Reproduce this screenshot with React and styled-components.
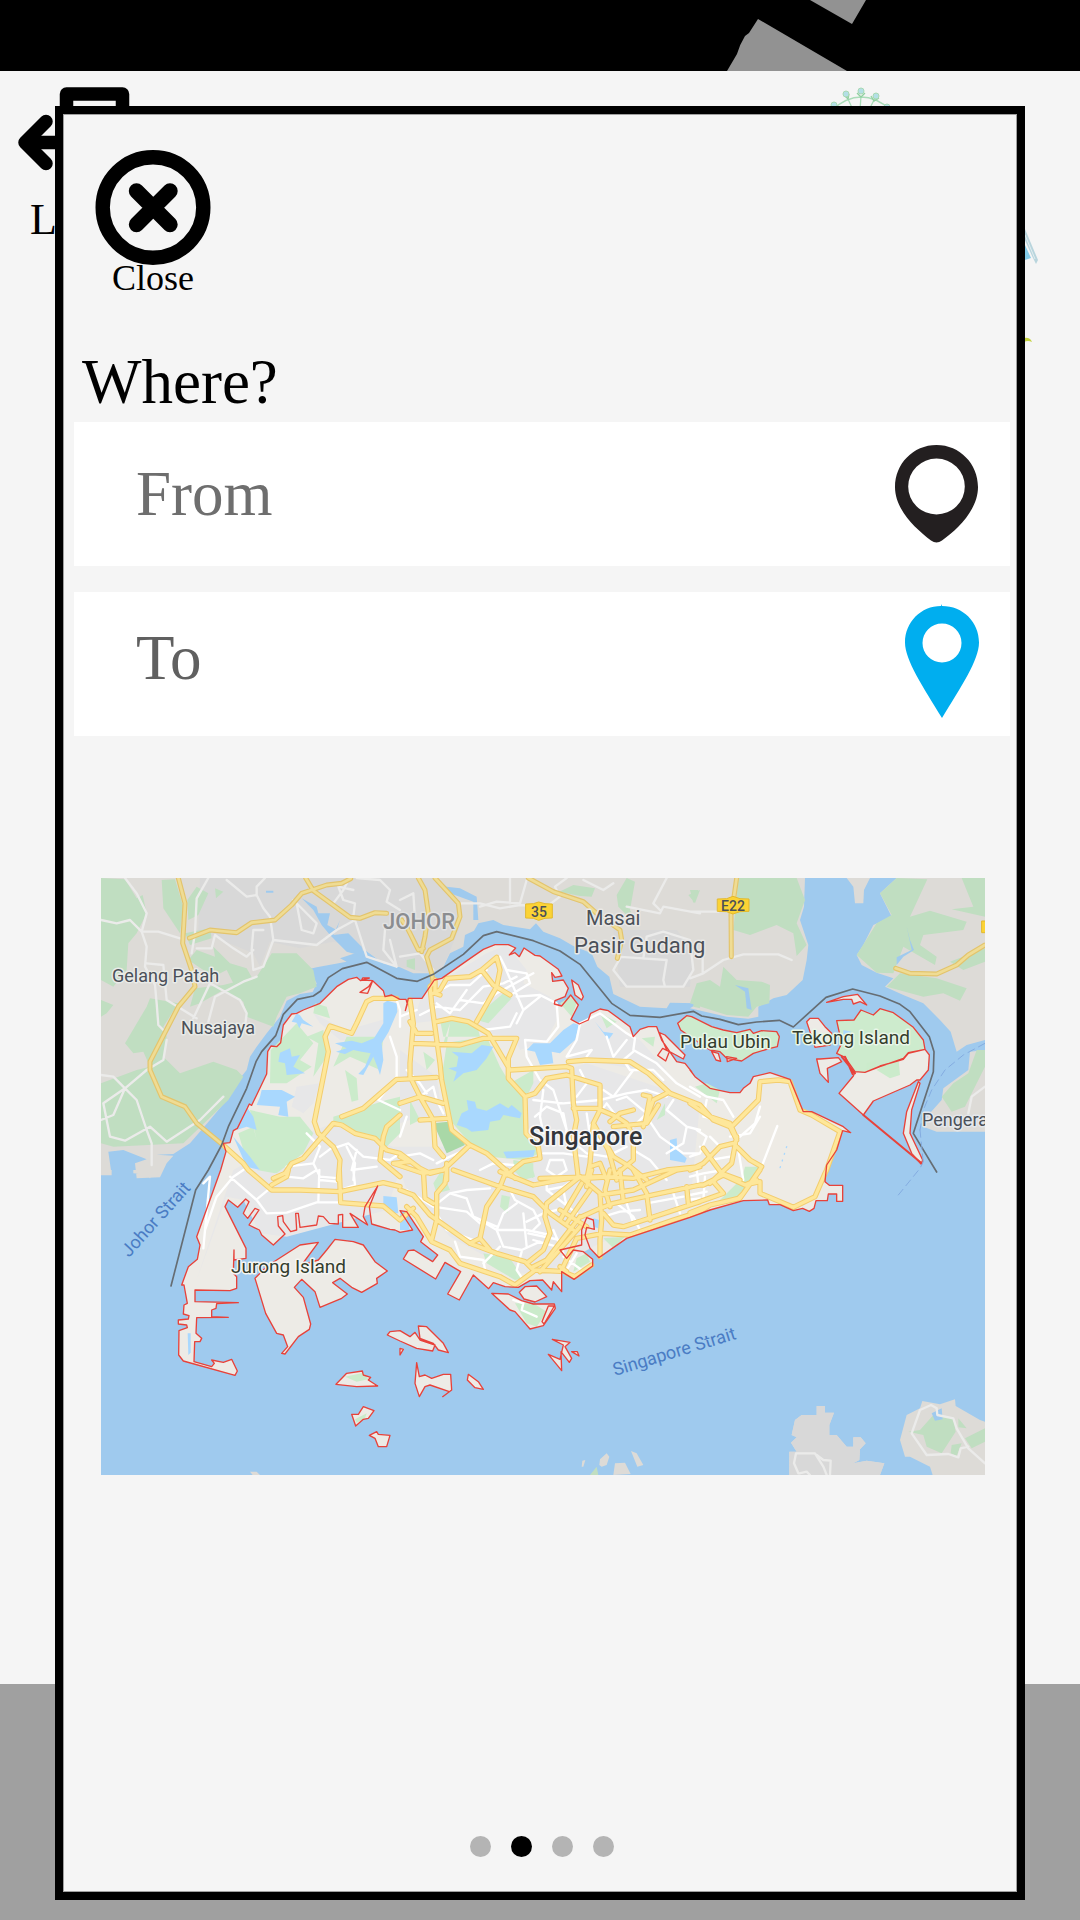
import React from 'react';
import styled, { createGlobalStyle } from 'styled-components';

const serif = '"Palatino Linotype", Palatino, "Liberation Serif", serif';
const sans = 'Roboto, "Liberation Sans", sans-serif';

const GlobalStyle = createGlobalStyle`
  * { box-sizing: border-box; }
  body { margin: 0; background: #f5f5f5; font-family: ${serif}; color: #000; }
  button, input { font-family: inherit; }
`;

const Page = styled.div`
  position: relative;
  display: flex;
  min-height: 100vh;
  padding: 106px 55px 20px;
  overflow: hidden;
`;

const Backdrop = styled.div`
  position: absolute;
  inset: 0;
  display: flex;
  flex-direction: column;
  background: #f5f5f5;
`;

const TopBar = styled.header`
  display: flex;
  justify-content: center;
  height: 71px;
  background: #000;
`;

const TopBarArt = styled.svg`
  width: 100%;
  height: 71px;
`;

const Home = styled.main`
  flex: 1;
  display: flex;
  justify-content: space-between;
  align-items: flex-start;
`;

const BackButton = styled.button`
  display: flex;
  flex-direction: column;
  align-items: flex-start;
  padding: 16px 0 0 18px;
  border: 0;
  background: none;
  color: #000;
  font-size: 44px;
  line-height: 48px;

  svg { display: block; }
  span { padding: 15px 0 0 12px; }
`;

const BottomBar = styled.footer`
  height: 236px;
  background: #a0a0a0;
`;

const Dialog = styled.section`
  position: relative;
  flex: 1;
  min-width: 0;
  display: flex;
  flex-direction: column;
  padding: 36px 7px 35px 11px;
  border: 8px solid #000;
  background: #f5f5f5;
  box-shadow: inset 0 0 0 1px #a0a0a0;
`;

const CloseButton = styled.button`
  align-self: flex-start;
  display: flex;
  flex-direction: column;
  align-items: center;
  margin-left: 21px;
  padding: 0;
  border: 0;
  background: none;
  color: #000;
  font-size: 36px;
  line-height: 27px;
  cursor: pointer;

  svg { display: block; }
`;

const Title = styled.h1`
  margin: 54px 0 4px 8px;
  font-size: 63px;
  line-height: 72px;
  font-weight: 400;
`;

const Form = styled.form`
  display: flex;
  flex-direction: column;
  gap: 26px;
`;

const Field = styled.label`
  display: flex;
  align-items: center;
  height: 144px;
  padding: 0 ${p => p.$inset}px 0 62px;
  background: #fff;

  svg { flex: none; display: block; }
`;

const FieldInput = styled.input`
  flex: 1;
  min-width: 0;
  height: 100%;
  padding: 0 0 ${p => p.$lift}px;
  border: 0;
  outline: 0;
  background: none;
  color: #000;
  font-size: 63px;

  &::placeholder { color: ${p => p.$tone}; opacity: 1; }
`;

const MapFigure = styled.figure`
  margin: 142px 25px 40px 27px;
`;

const MapSvg = styled.svg`
  display: block;
  width: 100%;
  height: auto;
  background: #9fcaee;
`;

const Dots = styled.nav`
  display: flex;
  justify-content: center;
  gap: 20px;
  margin-top: auto;
`;

const Dot = styled.button`
  width: 21px;
  height: 21px;
  padding: 0;
  border: 0;
  border-radius: 50%;
  background: ${p => (p.$active ? '#000' : '#b4b4b4')};
`;

const Place = styled.text`
  font-family: ${sans};
  font-size: ${p => p.$size || 18}px;
  font-weight: ${p => p.$weight || 400};
  fill: ${p => p.$color || '#4b5058'};
  stroke: ${p => p.$halo || 'none'};
  stroke-width: 3px;
  stroke-linejoin: round;
  paint-order: stroke;
`;

/* The map is drawn on six sheets, three across and two down. A shape is a
   list of runs, each written in the coordinates of its own sheet. */
const SHEETS = { A: [0, 0], B: [900, 0], C: [1770, 0], D: [0, 900], E: [900, 900], F: [1770, 900] };
const run = text => {
  const [dx, dy] = SHEETS[text[0]];
  return text.slice(1).trim().split(/\s+/).map(pair => {
    const [x, y] = pair.split(',').map(Number);
    return `${x + dx},${y + dy}`;
  });
};
const trace = shape => 'M' + shape.split('|').flatMap(part => run(part.trim())).join('L');
const closed = shapes => shapes.map(s => trace(s) + 'Z').join('');
const open = shapes => shapes.map(trace).join('');

const johor = [
  'A 3,24 | C 345,24 342,110 330,150 355,225 350,270 338,330 290,375 250,385 205,410 205,440 175,446 110,440 0,415 | B 895,400 810,398 800,415 720,410 640,372 628,320 592,290 575,250 520,228 480,205 430,185 408,160 390,178 310,165 280,150 235,160 222,182 195,195 190,230 150,250 130,290 95,310 40,310 0,292 | A 850,280 795,240 720,265 740,275 650,292 625,298 650,340 638,366 600,372 560,392 540,440 500,490 470,530 450,560 440,600 400,650 380,690 330,750 270,820 220,852 170,854 220,857 200,880 180,922 110,925 105,880 140,868 70,840 25,845 35,915 3,915',
  'D 100,0 190,0 150,25 125,12 100,10', 'D 3,0 35,0 35,16 3,16',
];
const pengerang = [
  'C 620,24 885,24 885,510 830,525 800,545 782,485 750,450 700,400 640,375 585,350 610,325 560,308 515,285 500,255 520,225 550,165 605,140 570,70',
  'C 470,24 490,50 495,100 520,100 522,60 540,24',
  'C 885,540 840,545 835,600 760,655 755,690 715,735 700,770 740,785 885,785',
];
const southShores = [
  'F 380,708 405,708 405,728 432,728 418,765 418,795 440,795 470,830 490,830 490,802 512,802 527,820 510,838 508,870 490,880 530,872 583,880 570,915 298,915 298,845 320,845 303,818 320,802 305,795 315,750 335,735 380,735',
  'F 697,693 750,703 795,688 797,708 870,750 885,755 885,915 728,915 720,890 660,860 645,860 630,810 650,735 690,715',
  'E 640,915 645,880 675,878 692,912', 'E 598,885 600,868 620,850 628,860 620,885 605,890', 'E 693,843 710,850 730,885 712,890',
  'E 545,890 547,872 556,870 550,890', 'D 450,905 470,905 480,915 458,915',
];
const malayGreens = [
  'A 3,24 75,28 110,85 128,75 140,130 110,190 85,220 80,300 40,350 3,330', 'A 185,30 225,28 250,110 240,190 190,115', 'A 262,90 290,50 325,70 295,135 265,150',
  'A 255,190 330,175 335,205 270,225', 'A 345,55 370,65 348,85', 'A 265,270 290,240 345,260 340,230 390,280 440,295 460,330 400,340 380,300 340,320',
  'A 515,250 590,250 640,300 650,350 600,370 560,380 530,440 520,470 440,440 430,395 370,360 300,400 270,410 285,355 370,345 470,320', 'A 75,520 140,410 150,385 235,400 190,470 200,500 190,560 240,610 340,575 410,600 430,620 385,690 250,820 40,830 3,820 3,640 110,600 150,590 130,545 100,550',
  'A 3,390 40,405 20,430 3,440', 'B 478,65 520,45 585,55 575,80 540,78', 'B 650,75 680,24 705,35 690,120 715,170 655,110', 'B 865,75 900,60 885,100', 'B 20,270 45,265 45,300 20,290', 'B 880,375 900,355 900,415 880,410',
  'C 145,24 320,24 345,90 320,160 350,225 320,258 310,190 260,165 180,195 130,180', 'C 20,340 60,330 90,350 100,290 140,330 215,335 240,345 238,400 200,410 175,440 110,435 0,400',
  'C 620,24 712,28 660,140 720,122 830,155 820,180 700,195 690,225 740,260 735,285 640,230 610,310 560,308 500,255 560,160 605,135 570,70', 'C 815,24 885,24 885,140 785,118 850,110', 'C 590,350 630,310 740,325 830,355 810,392 760,370 700,380', 'C 780,275 885,235 885,275 820,300', 'C 860,540 885,540 885,590 825,710 785,725 755,680 790,640 835,610', 'C 0,60 25,60 10,100',
  'F 655,785 690,780 730,735 790,745 797,785 755,850 710,830 700,795', 'F 805,745 830,775 805,772', 'F 825,805 885,775 885,815 845,835', 'F 785,825 815,820 800,858 782,850', 'E 570,915 590,890 595,915',
];
const malayTowns = [
  'A 300,24 900,24 900,290 850,280 795,240 700,215 600,235 510,215 480,290 460,250 340,200 295,180', 'B 0,24 110,24 180,110 180,170 130,290 90,310 0,290',
  'B 640,180 830,180 880,240 870,350 660,350',
];
const malayWater = [
  'A 605,85 650,110 655,130 690,130 682,165 710,180 720,150 700,195 745,190 785,230 795,260 740,245 690,195 665,165 640,120',
  'B 115,30 140,50 180,55 230,80 235,150 220,150 220,95 150,70', 'C 650,170 660,210 672,240 640,260 620,285 620,262 665,240', 'C 135,345 175,355 185,420 170,415 165,365', 'A 498,62 520,62 520,68 498,68', 'F 725,730 755,715 758,748 735,752',
];

const singapore = 'A 370,820 390,818 400,782 412,775 448,702 455,706 500,612 503,545 513,528 530,530 542,518 550,465 575,432 590,430 610,420 660,400 710,350 745,328 770,322 782,332 808,324 788,324 785,330 818,332 803,370 780,367 806,350 818,332 850,362 855,380 875,375 900,388 | B 18,388 22,402 16,422 25,385 66,385 103,330 125,325 215,262 250,238 285,224 325,224 347,234 328,255 345,248 358,260 372,234 405,256 420,258 475,298 486,318 465,322 455,308 458,334 490,330 505,355 495,380 465,392 463,402 485,408 512,375 535,405 513,448 538,462 565,450 572,430 600,417 625,422 690,470 700,500 720,478 745,470 770,470 785,510 830,575 855,580 875,605 | C 0,600 15,620 60,655 120,668 150,668 160,655 180,640 190,620 240,608 300,628 340,725 365,725 460,770 482,788 458,782 440,840 410,885 | F 405,35 418,46 458,46 458,94 440,94 440,72 415,72 412,92 378,92 372,115 358,124 338,115 310,122 270,104 238,104 233,90 160,92 60,120 0,142 | E 680,205 597,263 570,235 555,195 560,172 583,178 580,150 560,143 545,180 545,225 480,240 500,265 520,240 550,245 578,268 578,288 522,328 485,305 485,365 460,335 455,360 428,330 390,332 355,352 315,350 280,338 266,356 220,315 178,390 143,372 182,305 135,277 107,327 10,267 25,242 42,240 98,275 113,255 62,215 70,200 20,125 0,122 38,180 0,187 | D 885,180 870,178 815,162 808,110 833,48 795,110 790,140 803,165 750,130 775,172 728,172 728,133 715,135 715,162 688,160 670,140 655,138 650,165 600,172 595,130 587,130 590,180 572,185 550,155 548,137 533,140 535,168 555,192 520,225 485,195 478,180 447,165 477,120 465,115 443,145 430,130 447,95 437,87 413,112 385,90 375,110 438,235 438,265 402,270 402,240 400,310 410,320 410,355 390,362 285,360 285,395 415,398 350,401 348,415 335,420 335,440 385,442 290,443 288,490 305,505 300,515 284,515 282,575 335,590 343,580 335,570 370,577 395,568 412,603 405,616 250,573 236,555 237,482 262,473 260,465 235,462 235,450 265,447 267,437 250,432 252,405 262,400 252,345 245,345 265,290 292,268 300,225 290,200 362,0 | A 378,845';
const islands = [
  'C 390,567 445,563 455,575 412,595 415,637 390,610 380,567', 'C 350,455 360,445 385,445 405,470 425,490 420,525 375,532 365,500', 'C 410,397 460,380 503,373 530,405 510,395 490,402 485,388 460,388',
  'C 495,605 525,607 570,588 640,568 655,550 705,538 718,555 715,600 690,630 680,630 660,645 550,693 520,735 447,670 490,618',
  'C 690,640 665,720 660,790 698,870 693,882 665,850 640,790 650,725 685,635', 'C 65,545 85,550 92,574 78,570', 'C 110,560 140,565 112,575', 'B 515,330 535,345 550,380 545,390 525,375', 'B 778,488 795,495 855,555 850,567 800,540', 'B 788,535 808,545 797,573 773,556',
  'D 530,270 600,225 655,217 605,285 655,270 680,240 705,208 760,215 790,225 825,275 862,303 830,325 832,340 785,367 755,352 720,325 698,338 742,372 725,385 660,412 645,365 605,328 583,352 610,382 632,462 628,478 595,500 555,552 545,550 563,530 550,495 530,490 497,430 465,325 500,290',
  'D 708,643 740,610 787,603 790,615 812,622 805,630 833,648 770,650', 'D 755,733 775,733 790,710 822,722 805,745 790,748 767,768', 'D 808,796 830,785 835,793 870,796 860,830 835,830 825,805',
  'D 862,495 870,485 900,482 | E 30,500 45,487 60,510 105,525 98,543 50,535 0,513', 'E 55,468 80,470 130,520 145,548 115,540 100,520 60,505', 'E 50,578 58,620 75,615 95,625 130,613 152,613 155,660 128,680 148,665 90,645 75,650 58,680 45,640', 'E 205,613 235,635 250,658 225,653 202,630', 'E 0,535 10,538 0,555',
  'E 275,370 325,372 365,392 400,402 440,402 463,402 466,415 430,467 390,477 345,425 330,420', 'E 358,367 375,350 410,348 440,380 405,396 372,387', 'E 445,408 463,408 432,462 426,455', 'E 457,508 510,517 495,530 515,565 508,577 483,545 485,602 445,553 480,568 490,525', 'E 515,545 532,545 537,558',
];
const greenIslands = [
  'B 833,460 860,437 875,440 | C 5,440 65,470 100,480 140,488 180,478 190,490 215,482 260,485 268,500 262,530 240,535 190,550 155,573 110,565 90,545 60,540 0,500 -28,480',
  'C 440,452 492,450 513,420 550,435 570,416 610,428 670,472 700,510 705,538 655,548 640,565 570,590 525,607 495,605 465,562 440,550 455,520',
];
const urban = [
  'B 60,390 130,330 260,250 320,225 380,300 370,340 450,380 475,440 440,510 360,540 340,500 250,490 200,450 120,450 40,460', 'B 380,640 560,580 800,660 900,700 | F 0,110 | E 600,220 430,310 350,310 150,200 20,60 0,0 | D 860,120 560,200 480,190 430,90 380,80 290,330 | A 400,900 490,850 610,870 620,790 700,760 880,830 | B 100,830 200,830 340,890 420,850 380,780',
  'B 530,480 600,430 690,500 720,510 800,600 720,600 500,560', 'B 0,540 110,620 130,760 60,740 0,760', 'A 590,650 660,640 640,700 610,730 575,710', 'A 640,430 740,480 880,440 840,520 720,510 660,460',
];
const parks = [
  'A 512,540 590,460 640,520 600,570 635,590 560,640 510,640', 'A 620,500 670,480 680,560 640,620 655,520', 'A 415,790 460,770 470,810 450,720 540,740 600,740 640,790 610,850 530,910 480,900 430,840', 'A 645,400 680,410 690,445 640,430', 'A 735,600 770,625 775,690 755,695', 'A 740,500 850,500 840,600 750,560 700,590',
  'A 700,740 860,690 | B 0,680 0,790 | A 860,830 760,780 700,760', 'B 240,430 310,370 335,385 265,460 230,450', 'B 480,400 510,380 530,400 515,440', 'B 600,430 650,455 620,475', 'B 150,460 130,520 260,500 300,590 330,640 400,600 400,640 375,690 380,790 420,850 370,870 270,860 210,820 150,750 125,620', 'B 120,450 230,460 240,500 130,500', 'B 30,690 60,750 30,765', 'B 340,870 400,880 400,925 340,905', 'B 70,545 105,570 80,600', 'B 770,750 795,700 795,735', 'B 725,505 765,500 760,530',
  'E 125,0 150,60 110,70 100,40', 'E 305,75 330,80 322,130 300,110', 'E 340,0 400,0 405,20 370,30', 'E 250,250 330,265 370,325 345,330 260,280', 'E 530,265 560,250 570,275 520,305', 'E 610,205 675,200 640,235', 'E 345,400 400,400 440,425 410,470 380,460',
  'F 160,20 185,0 205,0 150,80 90,90', 'C 165,890 215,890 185,930 155,930', 'C 15,650 50,640 90,660 80,700', 'D 470,0 530,0 525,10', 'D 735,620 790,608 805,628 770,635', 'D 765,748 800,730 795,745 770,758', 'C 530,580 560,570 555,595 530,600', 'C 560,600 625,560 630,615 600,625',
];
const lakes = [
  'A 540,548 570,535 575,560 600,555 580,590 615,610 560,615 555,580 535,575', 'A 485,660 545,660 585,680 560,695 565,740 535,735 540,710 470,705 480,680', 'A 590,430 600,436 610,450 640,470 605,460 598,475 590,458 575,455', 'A 850,400 862,392 890,400 892,425 866,485 845,520 850,570 840,615 832,590 820,560 790,615 775,612 795,590 812,550 785,545 760,540 735,552 708,545 740,535 705,520 755,512 785,520 822,505 850,460',
  'A 440,710 460,740 470,780 440,770 410,780', 'A 400,800 450,860 480,900 440,890', 'B 145,595 170,590 175,560 155,545 215,550 245,525 280,530 260,565 230,600 190,610 160,635 170,605', 'B 170,765 185,730 205,720 200,690 225,695 230,715 260,722 300,700 325,715 335,705 365,730 360,745 310,735 300,750 270,755 265,780 215,785 200,775', 'B 310,845 405,840 400,860 320,865', 'B 520,460 538,465 525,510 480,550 455,545 460,580 420,585 405,545 380,540 400,520 450,520 490,480',
  'B 585,455 610,485 640,490 625,510', 'B 810,810 830,805 832,840 860,865 855,878 810,870', 'D 850,78 890,82 895,130 870,130 850,105', 'E 580,145 598,150 595,175 580,170', 'E 0,130 20,140 30,180 0,180', 'C 460,480 485,485 460,495', 'D 263,490 272,490 272,548 265,555',
];

const border = 'D 213,348 287,60 325,0 | A 365,825 385,770 440,655 468,575 485,545 527,497 550,433 592,388 640,378 662,363 685,323 727,296 800,277 890,325 | B 52,334 100,313 190,253 250,197 290,185 400,212 480,243 540,283 635,400 690,436 780,442 880,424 | C 35,438 90,448 145,464 200,456 268,451 310,471 408,382 488,357 570,378 630,403 660,425 718,500 732,545 730,605 670,790 740,906';

const malayLanes = [
  'A 75,24 110,70 140,130 125,185 140,230 135,290 165,345 170,400 175,465 195,485', 'A 3,150 50,160 90,150 125,185 175,185 240,205', 'A 325,24 290,85 285,190 275,250', 'A 380,30 440,80 470,75 470,50 495,24', 'A 470,75 490,115 510,140 520,210 490,290 460,300 455,240 460,180 490,180', 'A 290,235 335,235 345,195 400,235 440,260 460,240',
  'A 520,210 650,225 710,180 765,150 800,260 890,290', 'A 590,100 605,180 640,190 650,160 610,120 580,90', 'A 325,455 345,380 430,335 470,320', 'A 280,445 330,340 420,390 440,430 435,470', 'A 140,280 190,285 200,390 290,445', 'A 3,615 40,620 75,655 140,600 190,570 200,510', 'A 75,655 110,690 140,780 155,820 155,885', 'A 75,655 10,700 30,800 75,812 150,770 200,815 300,750 370,680', 'A 3,750 40,735 75,655', 'A 760,60 715,50 730,90 765,100 760,140', 'A 770,24 840,30 870,60 860,95 900,120', 'A 855,180 850,240 890,290 870,210', 'A 700,100 730,60 745,30',
  'B 0,90 40,70 45,150 0,150', 'B 0,260 60,250 100,300', 'B 180,100 240,100 300,115 360,105 440,110 480,80 465,50 500,24', 'B 240,110 290,95 360,100 380,30', 'B 550,30 610,60 640,40', 'B 680,110 780,130 790,110 900,130', 'B 780,120 760,100 800,24', 'B 650,260 730,265 740,200 790,185 870,210 880,300 850,350 680,350 640,300 660,265', 'B 725,265 800,270 790,330 795,350', 'B 330,24 330,100',
  'C 0,325 40,310 100,270 160,253 265,253 305,270', 'C 0,125 85,125', 'C 38,310 38,260 15,260', 'C 835,730 845,680 885,650', 'F 325,910 312,880 318,850 375,850 400,890 410,915', 'F 380,855 400,870 422,872 420,915', 'F 328,910 350,905 360,915', 'F 885,880 835,835 800,775 790,745 742,735 740,715 723,705 690,720 665,790 710,855 775,852 805,862 812,835 835,830',
];
const lanes = [
  'A 310,940 330,920 | D 310,235 315,180 350,80 400,20 430,0', 'D 390,20 470,90 500,130 560,128 650,97 720,97', 'D 470,88 510,55', 'D 655,95 658,0', 'D 560,20 610,25 650,0', 'D 660,30 710,35', 'D 735,55 765,45 760,0', 'A 560,890 640,880 660,830 620,790', 'A 640,880 660,920 720,925', 'A 700,835 745,820 790,860 870,870 900,850', 'A 660,860 700,830', 'A 890,390 900,420 | B 0,470', 'A 870,500 890,560 890,620 835,690 900,720', 'A 740,830 765,880 760,930', 'A 770,840 755,900 830,890',
  'B 100,370 150,345 210,345 260,300', 'B 60,435 110,410 180,420 250,350 310,340 350,320', 'B 110,400 150,430 200,360', 'B 180,390 250,400 290,370', 'B 300,260 320,300 380,310 390,340 340,370', 'B 310,280 340,350 370,420 350,460', 'B 350,380 420,375 470,400 475,470 440,515 375,510 380,560 420,630 460,660 500,780 490,810', 'B 370,420 420,380', 'B 250,480 330,470 350,430', 'B 290,370 400,310', 'B 50,420 0,440', 'B 560,560 575,540 500,560 530,510 540,460 600,430 680,490 705,505 700,540 770,580 830,640 900,680', 'B 620,500 640,560 680,510', 'B 700,545 670,570 690,600 760,600 790,630', 'B 400,690 490,700 600,690 680,670 740,660 800,680', 'B 405,740 440,710 490,730 500,780', 'B 430,660 420,740 430,790', 'B 540,600 560,640 530,680', 'B 610,660 640,680 700,600', 'B 650,690 680,680 740,730 700,770', 'B 740,740 780,800 850,850 900,850', 'B 820,690 800,720 860,770 900,780', 'B 860,770 850,820 800,850', 'B 500,800 560,850 620,860 680,830', 'B 430,850 490,850 560,860', 'B 440,900 450,870 490,870 500,900 470,920 440,900', 'B 560,730 570,800 620,820', 'B 60,680 100,650 110,690 130,730', 'B 20,740 0,800', 'B 20,600 60,640 80,670', 'B 110,880 150,860 220,830', 'B 240,900 280,880 340,885', 'B 0,860 60,850 100,870', 'B 700,840 750,870 800,930', 'B 570,770 620,700 650,740',
  'E 20,60 100,110 150,70 200,85 220,140 290,170', 'E 150,70 200,60 270,55', 'E 100,110 200,125 240,160', 'E 110,130 140,180 220,210', 'E 330,60 345,90 400,120 420,160 400,180', 'E 350,100 310,130 290,180', 'E 240,150 290,180 380,180 450,195', 'E 290,180 310,230 365,240 420,215', 'E 365,245 350,300 370,330', 'E 165,215 180,260 250,270 255,300', 'E 250,280 280,250 300,230', 'E 370,130 380,230', 'E 380,155 430,130 470,120', 'E 385,190 480,210', 'E 400,210 470,230', 'E 460,180 490,250', 'E 440,60 490,50 520,30', 'E 440,30 440,60 530,130', 'E 490,60 500,110', 'E 600,120 650,100 700,140 720,180', 'E 680,100 700,160', 'E 610,140 660,125 720,120', 'E 740,100 850,80', 'E 720,150 800,130', 'E 820,70 840,130', 'E 860,90 900,85', 'E 500,300 530,250', 'E 490,260 545,300', 'E 340,390 370,400 365,420 410,440',
  'C 0,650 50,680 100,690 130,740', 'C 0,690 60,740', 'C 50,690 40,740 90,750', 'C 210,710 195,760 150,800', 'C 120,800 180,790 210,740', 'C 30,830 60,870 120,860', 'C 20,780 50,800 30,850 0,860', 'C 215,890 262,768', 'C 140,810 160,930', 'F 0,20 40,10 100,0', 'F 20,0 25,40', 'F 45,20 40,90', 'F 0,75 50,65', 'C 60,800 90,830',
];
const malayHighways = [
  'A 235,24 255,100 248,220 278,310 285,350 235,410 150,575 150,600 185,680 255,710 290,760 375,830', 'A 268,204 330,180 410,188 455,158 525,150 575,105 605,70 680,45 725,40 752,26', 'A 617,24 640,62 750,142 780,145 825,128 860,130',
  'B 55,24 75,60 85,130 75,200 65,245', 'B 105,24 175,100 180,140 155,205 90,240 80,260 95,310 100,340', 'B 385,24 460,65 550,95 590,130 660,180 665,210 652,265', 'B 5,150 20,170 55,240 70,235', 'C 140,24 132,80 123,130 124,260', 'C 885,225 835,255 800,285 740,312 660,310 617,295',
];
const highways = [
  'A 375,830 430,880 | D 445,0 515,60 600,60 720,65 850,38 900,50', 'A 520,925 555,910 575,880 610,865 700,760 725,765 765,790 825,805 860,840 900,850 | B 60,895 90,910 130,900 210,825 260,850 345,925', 'A 725,740 790,715 890,628 900,628 | B 110,622', 'A 890,385 820,385 800,395 770,460 755,490 690,468 675,500 685,545 643,755 655,790 700,830 720,870 715,930', 'D 718,0 722,98 | D 850,108 900,150', 'A 900,735 860,770 850,800 840,870 900,920', 'D 515,45 560,20 565,0',
  'B 100,340 90,350 95,400 120,580 125,630 155,780 210,825', 'B 30,390 40,460 30,580 30,620 60,680 100,750 105,830 130,860', 'B 30,455 50,490 95,490', 'B 110,455 155,445 205,455 265,490 330,600 500,590 515,595 520,700 530,750 520,800 535,925', 'B 40,520 180,525 250,505 350,505 325,565 325,625 375,680 378,790 415,830 420,865 370,875 320,915', 'B 100,370 120,360 140,325 210,320 245,300 290,262 300,300 290,350 230,455', 'B 245,300 280,345 330,375', 'B 105,330 105,370 120,375', 'B 505,575 560,570 690,575 745,610 810,670 900,705 | C 70,750 120,770 140,810', 'B 375,680 405,670 440,625 500,615 600,645 600,720 580,760 625,840 650,930', 'B 520,715 590,715 650,740 680,760 700,800 700,870 640,920 560,925', 'B 640,770 740,760 775,705', 'B 580,765 570,880 560,930', 'B 730,675 750,680 735,760', 'B 800,670 760,690 730,770', 'B 0,860 30,875 | E -20,-20 70,10 130,0', 'B 60,750 140,745', 'B 0,700 60,680 130,700', 'B 630,755 660,730 700,720', 'B 600,790 640,860 690,890 740,930', 'B 420,925 600,920 700,925 800,900 900,890 | C 0,900 40,880 90,830 130,820 180,870 215,890 160,970 | F 145,85 60,105 0,128',
  'B 570,890 600,880 620,930', 'B 140,880 140,930',
  'E 0,60 40,75 90,135 210,220 290,250 375,275 400,300 500,305 480,290', 'E 70,0 75,85 100,100', 'E 140,0 135,40 110,70 110,150 95,210', 'E 20,110 50,140 95,215 150,240 180,280 300,320 345,345 400,305', 'E 160,0 300,50 400,80 450,130 520,180', 'E 320,0 300,50 260,110 240,205 270,240', 'E 210,220 240,205', 'E 300,5 400,45 480,30 540,20 600,70 605,150 600,210 600,260', 'E 540,20 440,100 435,140 450,190 430,240 380,280', 'E 545,40 480,150', 'E 570,60 500,160', 'E 400,290 440,270 540,140', 'E 420,305 540,170', 'E 480,120 560,170', 'E 485,300 530,205 610,190 690,195 820,150 900,125 | F 60,105 150,85 210,0', 'E 545,140 600,115 640,100 780,70 900,45 | F 40,45 100,15 165,45 200,30', 'E 600,75 700,60 830,0 900,-10', 'E 610,130 640,165 670,170 900,95', 'E 630,0 615,60 630,110', 'E 660,0 670,95', 'E 700,0 740,70 750,150', 'E 860,50 865,100', 'E 575,0 560,50', 'E 500,310 525,320 575,285', 'E 0,150 40,115',
  'C 0,700 60,740 120,760 140,805', 'C 130,765 205,690 210,635 265,630 300,635 330,720 365,735 450,785 410,900 | F 405,10 375,80 310,112 210,70 210,35 165,45', 'C 40,835 95,910 150,930', 'C 140,800 125,880 60,940', 'F 95,10 70,35 100,70 0,105',
];
const airport = ['C 210,690 265,640 300,635 330,725 450,785 405,900 | F 400,20 370,80 310,110 210,70 200,10'];
const ferryRoutes = ['C 885,520 820,555 765,600 725,660 700,720 690,780', 'F 625,75 690,-5 700,-25', 'C 690,780 695,830 700,880'];

function SingaporeMap() {
  return (
    <MapSvg viewBox="0 0 884 597" role="img" aria-label="Singapore">
      <g transform="scale(0.333333) translate(-3 -24)" strokeLinejoin="round" strokeLinecap="round">
        <path d={closed([...johor, ...pengerang, ...southShores])} fill="#dddbd7" />
        <path d={closed(malayTowns)} fill="#d8d8d8" />
        <path d={closed(southShores.slice(0, 1))} fill="#d8d8d8" />
        <path d={closed(malayGreens)} fill="#c0dec1" />
        <path d={closed(malayWater)} fill="#9fcaee" />
        <path d={open(malayLanes)} fill="none" stroke="#ebebea" strokeWidth="7" />
        <path d={open(malayHighways)} fill="none" stroke="#e3c46c" strokeWidth="15" />
        <path d={open(malayHighways)} fill="none" stroke="#efdc94" strokeWidth="8" />

        <path d={closed([singapore, ...islands])} fill="#edebe6" />
        <path d={closed(greenIslands)} fill="#cdebcd" />
        <path d={closed(urban)} fill="#e7e7e8" />
        <path d={closed(airport)} fill="#eeebe5" />
        <path d={closed(parks)} fill="#cbebcb" />
        <path d={closed(['B 100,760 145,755 195,825 140,850'])} fill="#a9d8a7" />
        <path d={closed(lakes)} fill="#a9d8fe" />
        <path d={open(lanes)} fill="none" stroke="#fff" strokeWidth="7" />
        <path d={open(highways)} fill="none" stroke="#f3cd6e" strokeWidth="16" />
        <path d={open(highways)} fill="none" stroke="#fee79a" strokeWidth="10" />
        <path d={open(['C 290,830 265,910'])} fill="none" stroke="#a9d8fe" strokeWidth="4" strokeDasharray="3 18" />
        <path d={closed([singapore, ...islands, ...greenIslands])} fill="none" stroke="#e8423a" strokeWidth="4" />
        <path d={open(['C 520,735 695,880', 'C 455,560 495,610', 'C 465,560 488,612'])} fill="none" stroke="#e8423a" strokeWidth="6" />
        <path d={open([border])} fill="none" stroke="#666d73" strokeWidth="5" />
        <path d={open(ferryRoutes)} fill="none" stroke="#84ace0" strokeWidth="3" strokeDasharray="22 14" />

        <g fill="#fbd335" stroke="#e3b92c" strokeWidth="3">
          <path d="M1278 102L1300 101L1316 96L1335 101L1357 102V144L1335 145L1316 151L1300 145L1278 144Z" />
          <path d="M1853 87L1880 86L1899 79L1920 86L1947 87V124L1920 125L1899 132L1880 125L1853 124Z" />
          <path d="M2646 153H2660V188H2646Z" />
        </g>
      </g>

      <Place x="282" y="51" $size={22} $weight={500} $color="#8b8d90" $halo="#e2e2e2">JOHOR</Place>
      <Place x="11" y="104" $halo="#e9ebe8">Gelang Patah</Place>
      <Place x="80" y="156" $halo="#e9ebe8">Nusajaya</Place>
      <Place x="485" y="47" $size={20} $halo="#e9e8e6">Masai</Place>
      <Place x="473" y="75" $size={22} $halo="#e9e8e6">Pasir Gudang</Place>
      <Place x="579" y="170" $size={19} $color="#343d2d" $halo="#e9f6e9">Pulau Ubin</Place>
      <Place x="691" y="166" $size={19} $color="#343d2d" $halo="#e9f6e9">Tekong Island</Place>
      <Place x="130" y="395" $size={19} $color="#343d2d" $halo="#f6f5f2">Jurong Island</Place>
      <Place x="428" y="267" $size={25} $weight={500} $color="#33363b" $halo="#f7f7f7">Singapore</Place>
      <Place x="821" y="248" $halo="#e4e8ec">Pengera</Place>
      <Place transform="translate(28 380) rotate(-48)" $color="#4a7cc4">Johor Strait</Place>
      <Place transform="translate(514 498) rotate(-17)" $color="#4a7cc4">Singapore Strait</Place>
      <Place x="438" y="39" $size={14} $weight={500} textAnchor="middle">35</Place>
      <Place x="632" y="33" $size={14} $weight={500} textAnchor="middle">E22</Place>
    </MapSvg>
  );
}

function CloseIcon() {
  return (
    <svg width="116" height="115" viewBox="0 0 116 115" fill="none" stroke="#000" aria-hidden="true">
      <circle cx="58" cy="57.5" r="50.3" strokeWidth="14.4" />
      <path d="M41.5 41L75 74.5M75 41L41.5 74.5" strokeWidth="15.4" strokeLinecap="round" />
    </svg>
  );
}

function OriginPin() {
  return (
    <svg width="83" height="98" viewBox="0 0 83 98" aria-hidden="true">
      <path fill="#231f20" fillRule="evenodd" d="M41.5 0C18 0 0 19 0 42C0 65 21 84 36 95.5Q41.500 99.500 47 95.500C62 85 83 65 83 42C83 19 65 0 41.500 0ZM41.500 13.500A28.300 28 0 1 1 41.500 69.500A28.300 28 0 1 1 41.500 13.500Z" />
    </svg>
  );
}

function DestinationPin() {
  return (
    <svg width="74" height="120" viewBox="0 0 74 120" aria-hidden="true">
      <path fill="#00aeef" fillRule="evenodd" d="M36 2L36.500 0L37 2C58 2 74 18 74 38.500C74 56 56 83 37 114C18 83 0 56 0 38.500C0 18 16 2 36 2ZM37 19.500A19.500 19.500 0 1 0 37 58.500A19.500 19.500 0 1 0 37 19.500Z" />
    </svg>
  );
}

function BackIcon() {
  return (
    <svg width="112" height="94" viewBox="0 0 112 94" fill="none" stroke="#000" strokeLinejoin="round" aria-hidden="true">
      <path d="M48.500 30V7H104.500V30" strokeWidth="13.500" />
      <path d="M28 34.500L7 55.500L28 76.500" strokeWidth="13.500" strokeLinecap="round" />
      <path d="M10 55.500H60" strokeWidth="13.500" />
    </svg>
  );
}

function Landmarks() {
  return (
    <svg width="255" height="290" viewBox="825 71 255 290" fill="none" aria-hidden="true">
      <g stroke="#a9dcb8" strokeWidth="1.300">
        <path d="M832 110Q861 84 891 110M848 99L853 110M861 96L860 110M874 100L869 110" />
        <path d="M844 95L848 99L849 94M857 93L861 97L865 93M871 96L874 101L879 98" stroke="#8fd0a0" />
      </g>
      <g fill="#b3dfe6" stroke="#a8d9b4">
        <circle cx="834" cy="105" r="3" /><circle cx="846" cy="94" r="3" /><circle cx="861" cy="91" r="3" /><circle cx="876" cy="96" r="3" /><circle cx="887" cy="107" r="3" />
      </g>
      <path d="M1025 229L1038 260L1036 264L1032 256L1024 238Z" fill="#b9d5dd" />
      <path d="M1025 235L1035 259" stroke="#e2edf0" />
      <path d="M1025 245L1031 258L1025 260Z" fill="#83cce9" />
      <path d="M1024 338Q1030 337 1032 342Q1028 340 1024 342Z" fill="#c4d33f" />
    </svg>
  );
}

export default function App() {
  return (
    <>
      <GlobalStyle />
      <Page>
        <Backdrop>
          <TopBar>
            <TopBarArt viewBox="0 0 1080 71" fill="#929292" aria-hidden="true">
              <path d="M810 0L852 24L866 0ZM727 71L737 54Q740 44 745 36L749 33L758 19L847 71Z" />
            </TopBarArt>
          </TopBar>
          <Home>
            <BackButton type="button">
              <BackIcon />
              <span>L</span>
            </BackButton>
            <Landmarks />
          </Home>
          <BottomBar />
        </Backdrop>

        <Dialog role="dialog" aria-labelledby="where">
          <CloseButton type="button">
            <CloseIcon />
            Close
          </CloseButton>
          <Title id="where">Where?</Title>
          <Form>
            <Field $inset={32}>
              <FieldInput name="from" placeholder="From" aria-label="From" $tone="#6e6e6e" $lift={0} />
              <OriginPin />
            </Field>
            <Field $inset={31}>
              <FieldInput name="to" placeholder="To" aria-label="To" $tone="#606060" $lift={12} />
              <DestinationPin />
            </Field>
          </Form>
          <MapFigure>
            <SingaporeMap />
          </MapFigure>
          <Dots>
            {[0, 1, 2, 3].map(i => (
              <Dot key={i} type="button" $active={i === 1} aria-label={`${i + 1}`} />
            ))}
          </Dots>
        </Dialog>
      </Page>
    </>
  );
}
